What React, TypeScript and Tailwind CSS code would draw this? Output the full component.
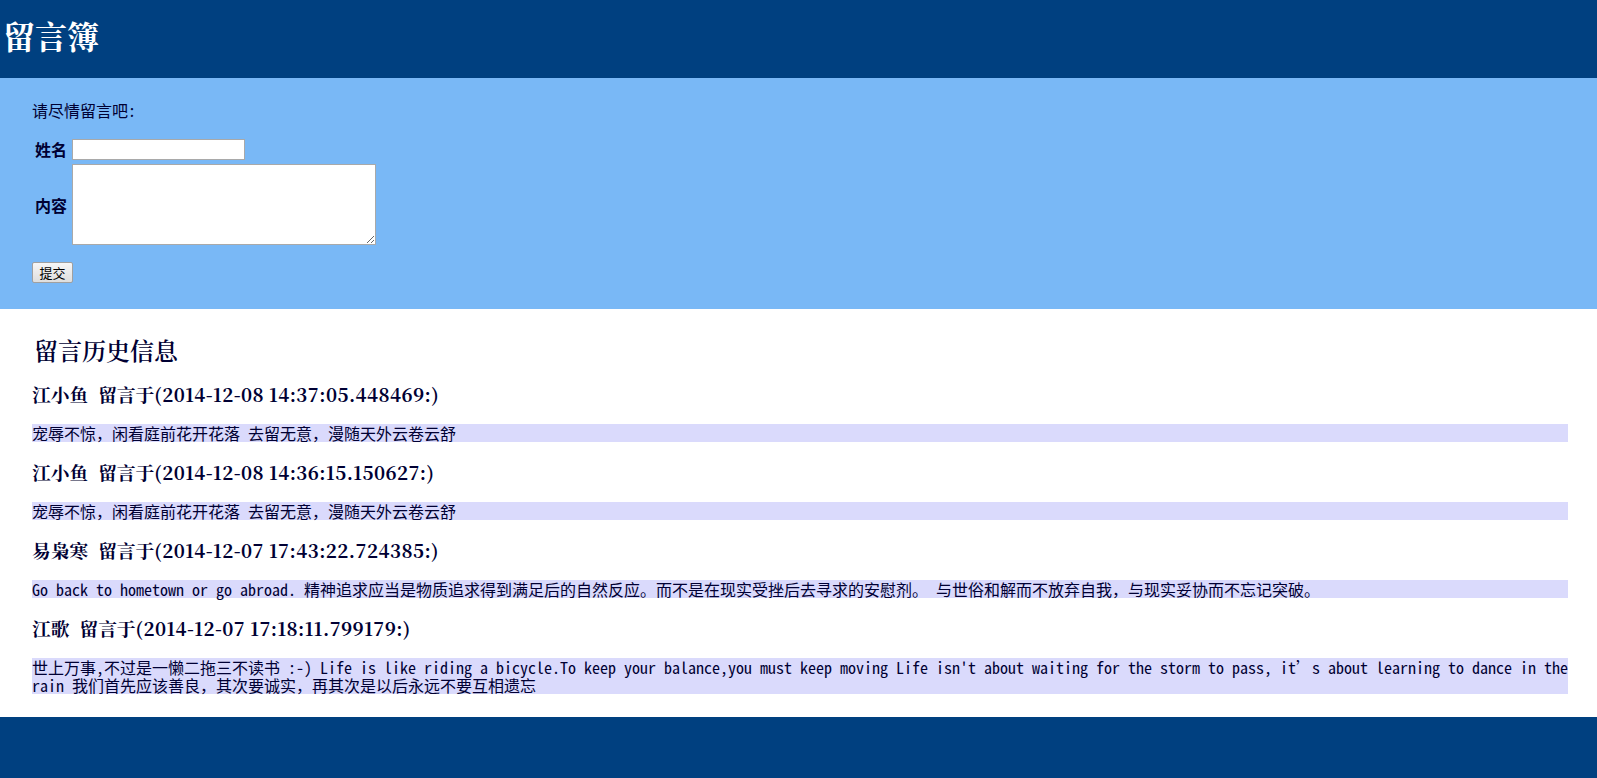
import React from "react";

const entries = [
  {
    name: "江小鱼",
    time: "2014-12-08 14:37:05.448469:",
    text: "宠辱不惊，闲看庭前花开花落 去留无意，漫随天外云卷云舒",
  },
  {
    name: "江小鱼",
    time: "2014-12-08 14:36:15.150627:",
    text: "宠辱不惊，闲看庭前花开花落 去留无意，漫随天外云卷云舒",
  },
  {
    name: "易枭寒",
    time: "2014-12-07 17:43:22.724385:",
    text: "Go back to hometown or go abroad. 精神追求应当是物质追求得到满足后的自然反应。而不是在现实受挫后去寻求的安慰剂。 与世俗和解而不放弃自我，与现实妥协而不忘记突破。",
  },
  {
    name: "江歌",
    time: "2014-12-07 17:18:11.799179:",
    text: "世上万事,不过是一懒二拖三不读书 :-) Life is like riding a bicycle.To keep your balance,you must keep moving Life isn't about waiting for the storm to pass, it’s about learning to dance in the rain 我们首先应该善良，其次要诚实，再其次是以后永远不要互相遗忘",
  },
];

export default function App() {
  return (
    <div className="min-h-screen bg-white text-[#000033] font-['Noto_Sans_Mono_CJK_SC','Noto_Sans_CJK_SC','Liberation_Mono',monospace]">
      <header className="bg-[#004080] h-[78px] pt-[15px] pl-[3px]">
        <h1 className="text-[32px] leading-[40px] font-bold text-white font-['Noto_Serif_CJK_SC','Noto_Sans_CJK_SC',serif]">
          留言簿
        </h1>
      </header>

      <section className="bg-[#79b8f6] h-[231px] pt-[23px] pl-[32px]">
        <p className="text-[16px] leading-[18px]">请尽情留言吧:</p>
        <div className="mt-[20px] flex items-center">
          <label className="w-[40px] pl-[3px] text-[16px] leading-[18px] font-bold -mt-[2px]">姓名</label>
          <input
            type="text"
            className="w-[173px] h-[21px] border border-[#a9a9a9] bg-white outline-none"
          />
        </div>
        <div className="mt-[4px] flex items-center">
          <label className="w-[40px] pl-[3px] text-[16px] leading-[18px] font-bold">内容</label>
          <textarea className="w-[304px] h-[81px] border border-[#a9a9a9] bg-white outline-none" />
        </div>
        <button className="mt-[17px] w-[41px] h-[21px] text-[13px] leading-[13px] text-black bg-gradient-to-b from-[#f6f6f6] to-[#dedede] border border-[#a0a0a0] rounded-[2px]">
          提交
        </button>
      </section>

      <section className="pl-[32px] pr-[29px] pt-[27px] pb-[23px]">
        <h2 className="text-[24px] leading-[28px] font-semibold pl-[2px] font-['Noto_Serif_CJK_SC','Noto_Sans_CJK_SC',serif]">
          留言历史信息
        </h2>
        {entries.map((e, i) => (
          <div key={i}>
            <h3 className="mt-[19px] text-[18.72px] leading-[22px] font-bold font-['Noto_Serif_CJK_SC','Noto_Sans_CJK_SC',serif]">
              {e.name}
              <span className="ml-[10px]">留言于</span>
              <span className="tracking-[0.4px]">({e.time})</span>
            </h3>
            <p className="mt-[19px] bg-[#dadafc] text-[16px] leading-[18px]">{e.text}</p>
          </div>
        ))}
      </section>

      <footer className="bg-[#004080] h-[80px]" />
    </div>
  );
}
